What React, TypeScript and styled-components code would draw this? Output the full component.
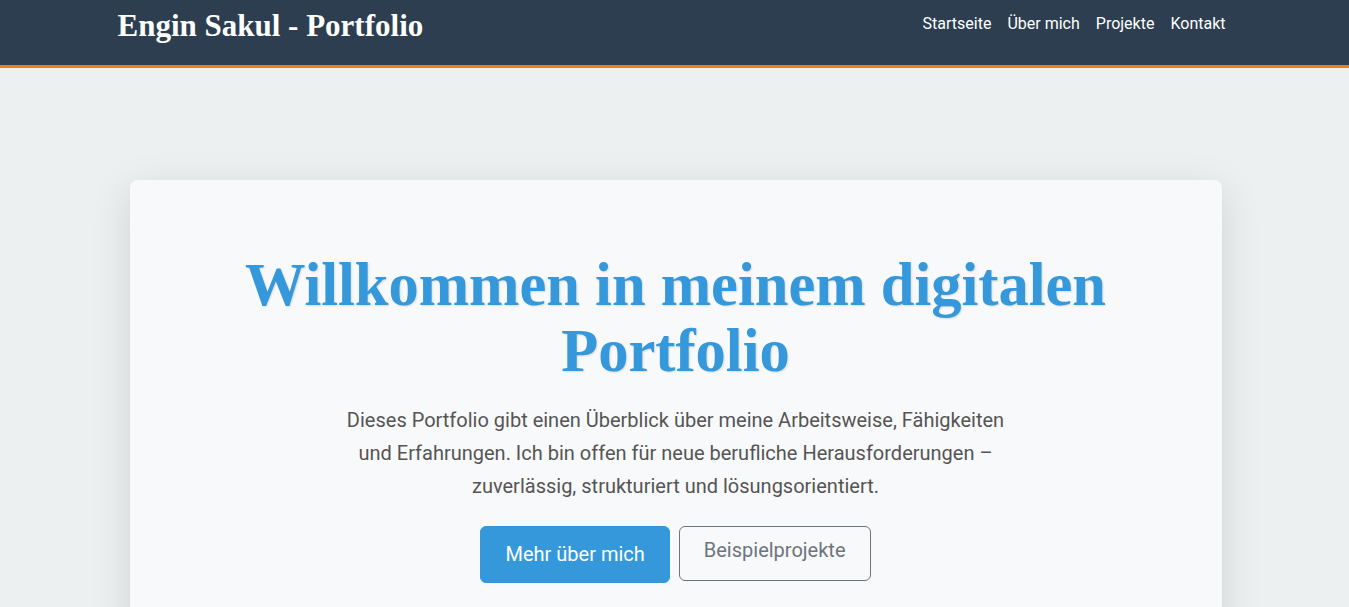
import React from 'react'
import styled, { createGlobalStyle } from 'styled-components'

const GlobalStyle = createGlobalStyle`
  * { box-sizing: border-box; }
  body {
    margin: 0;
    background: #ecf0f1;
    font-family: Roboto, "Liberation Sans", sans-serif;
    color: #333;
  }
`

const Header = styled.header`
  background: #2c3e50;
  border-bottom: 3px solid #e67e22;
  height: 68px;
`

const Container = styled.div`
  max-width: 1140px;
  margin: 0 auto;
  padding: 0 12px;
`

const NavBar = styled(Container)`
  display: flex;
  justify-content: space-between;
  align-items: flex-start;
`

const Brand = styled.a`
  font-family: "Liberation Serif", "DejaVu Serif", serif;
  font-weight: 700;
  font-size: 31px;
  line-height: 1.5;
  color: #fff;
  text-decoration: none;
  padding-top: 3px;
  padding-left: 1px;
`

const NavList = styled.ul`
  display: flex;
  list-style: none;
  margin: 0 -1px 0 0;
  padding: 12px 0 0;
`

const NavLink = styled.a`
  display: block;
  padding: 0 8px;
  font-size: 16px;
  line-height: 24px;
  color: #fff;
  text-decoration: none;
`

const Main = styled.main`
  padding: 112px 0 60px 2px;
`

const Card = styled.section`
  max-width: 1092px;
  margin: 0 auto;
  background: #f8f9fa;
  border-radius: 8px;
  box-shadow: 0 10px 40px rgba(0, 0, 0, 0.12);
  padding: 72px 48px 64px;
  text-align: center;
`

const Title = styled.h1`
  margin: 0 0 20px;
  font-family: "Liberation Serif", "DejaVu Serif", serif;
  font-weight: 700;
  font-size: 60.5px;
  line-height: 66px;
  color: #3498db;
  text-shadow: 1px 1px 2px rgba(0, 0, 0, 0.12);
`

const Lead = styled.p`
  max-width: 690px;
  margin: 0 auto 23px;
  font-size: 20px;
  line-height: 33px;
  color: #555;
`

const Actions = styled.div`
  display: flex;
  justify-content: center;
  align-items: flex-start;
  gap: 9px;
`

const Button = styled.a<{ $outline?: boolean }>`
  display: inline-block;
  border-radius: 6px;
  font-size: 20px;
  line-height: 24px;
  text-decoration: none;
  padding: ${p => (p.$outline ? '11px 24px 18px' : '15px 24px 16px')};
  background: ${p => (p.$outline ? 'transparent' : '#3498db')};
  color: ${p => (p.$outline ? '#6c757d' : '#fff')};
  border: 1px solid ${p => (p.$outline ? '#6c757d' : '#3498db')};
`

const links = ['Startseite', 'Über mich', 'Projekte', 'Kontakt']

export default function App() {
  return (
    <>
      <GlobalStyle />
      <Header>
        <NavBar>
          <Brand href="#">Engin Sakul - Portfolio</Brand>
          <NavList>
            {links.map(l => (
              <li key={l}>
                <NavLink href="#">{l}</NavLink>
              </li>
            ))}
          </NavList>
        </NavBar>
      </Header>
      <Main>
        <Card>
          <Title>
            Willkommen in meinem digitalen
            <br />
            Portfolio
          </Title>
          <Lead>
            Dieses Portfolio gibt einen Überblick über meine Arbeitsweise, Fähigkeiten und
            Erfahrungen. Ich bin offen für neue berufliche Herausforderungen – zuverlässig,
            strukturiert und lösungsorientiert.
          </Lead>
          <Actions>
            <Button href="#">Mehr über mich</Button>
            <Button href="#" $outline>
              Beispielprojekte
            </Button>
          </Actions>
        </Card>
      </Main>
    </>
  )
}
